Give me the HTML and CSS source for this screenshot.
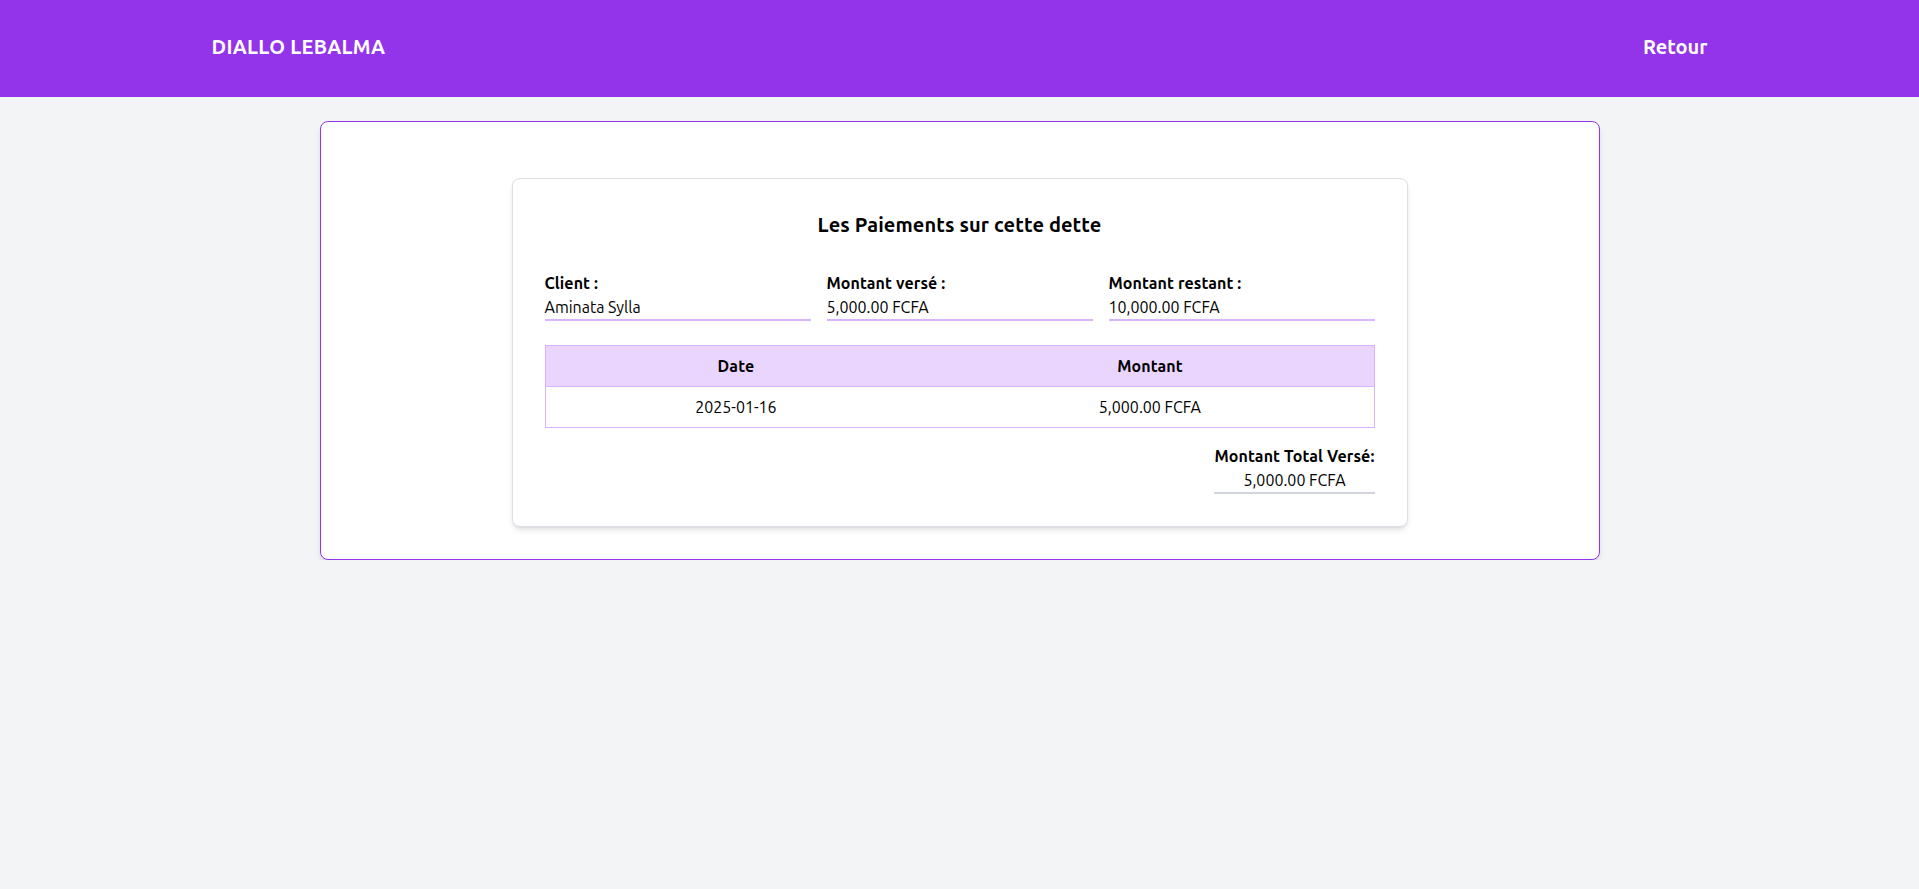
FILE: index.html
```html
<!DOCTYPE html>
<html lang="fr">
<head>
<meta charset="utf-8">
<title>Paiements</title>
<link rel="stylesheet" href="styles.css">
</head>
<body>
<header class="topbar">
  <div class="topbar-inner">
    <span class="brand">DIALLO LEBALMA</span>
    <a class="back" href="#">Retour</a>
  </div>
</header>
<main class="page">
  <section class="outer-card">
    <div class="inner-card">
      <h2 class="title">Les Paiements sur cette dette</h2>
      <div class="info-grid">
        <div class="info">
          <div class="info-label">Client :</div>
          <div class="info-value">Aminata Sylla</div>
        </div>
        <div class="info">
          <div class="info-label">Montant versé :</div>
          <div class="info-value">5,000.00 FCFA</div>
        </div>
        <div class="info">
          <div class="info-label">Montant restant :</div>
          <div class="info-value">10,000.00 FCFA</div>
        </div>
      </div>
      <table class="pay-table">
        <thead>
          <tr><th class="col-date">Date</th><th>Montant</th></tr>
        </thead>
        <tbody>
          <tr><td>2025-01-16</td><td>5,000.00 FCFA</td></tr>
        </tbody>
      </table>
      <div class="total-row">
        <div class="total">
          <div class="total-label">Montant Total Versé:</div>
          <div class="total-value">5,000.00 FCFA</div>
        </div>
      </div>
    </div>
  </section>
</main>
</body>
</html>
```
FILE: styles.css
```css
* { box-sizing: border-box; }
html, body { margin: 0; padding: 0; }
body {
  background: #f3f4f6;
  font-family: "Ubuntu", "Lato", "Noto Sans", sans-serif;
  font-size: 16px;
  line-height: 24px;
  color: #000;
}
.topbar {
  background: #9333ea;
  height: 97px;
  display: flex;
  align-items: center;
}
.topbar-inner {
  width: 100%;
  max-width: 1536px;
  margin: 0 auto;
  padding: 0 20px;
  display: flex;
  justify-content: space-between;
  align-items: center;
  margin-top: -3px;
}
.brand, .back {
  color: #fff;
  font-weight: 700;
  font-size: 20px;
  line-height: 28px;
  text-decoration: none;
}
.brand { letter-spacing: 0.3px; }
.page {
  padding-top: 24px;
}
.outer-card {
  max-width: 1280px;
  margin: 0 auto;
  background: #fff;
  border: 1px solid #9333ea;
  border-radius: 8px;
  padding: 32px;
  box-shadow: 0 4px 6px -1px rgba(0,0,0,0.1), 0 2px 4px -2px rgba(0,0,0,0.1);
}
.inner-card {
  max-width: 896px;
  margin: 24px auto 0;
  background: #fff;
  border: 1px solid #e0dde6;
  border-radius: 8px;
  padding: 32px;
  box-shadow: 0 4px 6px -1px rgba(0,0,0,0.1), 0 2px 4px -2px rgba(0,0,0,0.1);
}
.title {
  margin: 0 0 32px;
  text-align: center;
  font-size: 20px;
  line-height: 28px;
  font-weight: 700;
  letter-spacing: 0.12px;
}
.info-grid {
  display: grid;
  grid-template-columns: repeat(3, 1fr);
  gap: 16px;
  margin-bottom: 24px;
}
.info-label { font-weight: 700; letter-spacing: 0.1px; }
.info-value { border-bottom: 2px solid #d8b4fe; }
.pay-table {
  width: 100%;
  border-collapse: collapse;
  border: 1px solid #d8b4fe;
}
.pay-table th, .pay-table td {
  text-align: center;
  padding: 8px 16px;
  border: 1px solid #d8b4fe;
  border-left: none;
  border-right: none;
}
.pay-table th {
  background: #ead5ff;
  font-weight: 700;
  letter-spacing: 0.1px;
}
.col-date { width: 46%; }
.total-row {
  display: flex;
  justify-content: flex-end;
  margin-top: 16px;
}
.total { text-align: center; }
.total-label { font-weight: 700; letter-spacing: 0.12px; }
.total-value { border-bottom: 2px solid #d1d5db; }
```
